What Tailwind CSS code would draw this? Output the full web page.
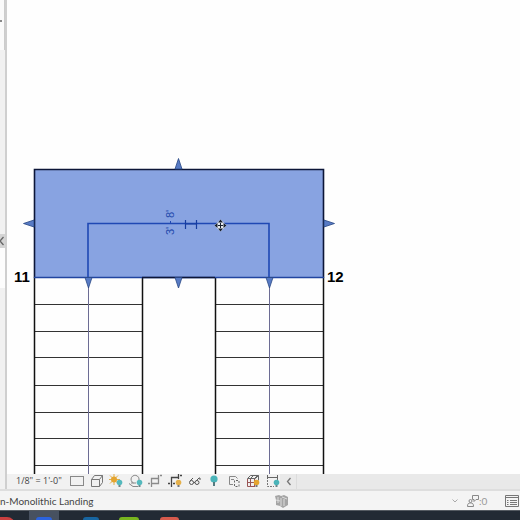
<!DOCTYPE html>
<html lang="en">
<head>
  <meta charset="UTF-8">
  <meta name="viewport" content="width=device-width, initial-scale=1.0">
  <title>Stair Plan</title>
  <script src="https://cdn.jsdelivr.net/npm/@tailwindcss/browser@4"></script>
</head>
<body class="h-screen overflow-hidden flex flex-col bg-[#f3f3f3] font-['Open_Sans',sans-serif] text-[#444]">
  <!-- Workspace -->
  <div class="flex-1 min-h-0 flex">
    <!-- Collapsed side panel -->
    <aside class="w-[7px] shrink-0 flex flex-col bg-[#f1f1f1] border-r-2 border-[#cfcfcf]">
      <div class="h-[50px] border-r border-[#ccc] bg-[#fafafa] flex items-center"><span class="w-[2px] h-[2px] mb-2 bg-[#888]"></span></div>
      <div class="flex-1"></div>
      <button type="button" aria-label="Expand panel" class="h-[14px] bg-[#d4d4d4] overflow-hidden">
        <svg class="w-[5px] h-[14px]" viewBox="0 0 5 14" fill="none" stroke="#666" stroke-width="1.3"><path d="M3.5 3L0 7l3.5 4"/></svg>
      </button>
      <div class="h-[40px] bg-[#fdfdfd]"></div>
      <div class="h-[201px] bg-[#f1f1f1]"></div>
    </aside>

    <main class="flex-1 min-w-0 flex flex-col">
      <!-- Drawing -->
      <div class="flex-1 min-h-0 bg-[#fefefe] overflow-hidden">
        <svg width="513" height="474" viewBox="7 0 513 474" fill="none">
          <!-- Landing -->
          <rect x="34" y="169" width="290" height="108" fill="#88a3e1"/>
          <!-- Treads -->
          <path d="M34 304.500H142M34 331.500H142M34 357.500H142M34 385.500H142M34 412.500H142M34 438.500H142M34 465.500H142M215 304.500H324M215 331.500H324M215 357.500H324M215 385.500H324M215 412.500H324M215 438.500H324M215 465.500H324" stroke="#333"/>
          <!-- Run outlines -->
          <path d="M34.500 277V474M142.500 277V474M215.500 277V474M323.500 277V474" stroke="#111" stroke-width="1.500"/>
          <path d="M88.500 277V474M269.500 277V474" stroke="#6c6c94"/>
          <path d="M34.500 277.500V169.500H323.500V277.500" stroke="#0c1638" stroke-width="1.600"/>
          <path d="M34 277.500H324" stroke="#2145a0" stroke-width="1.400"/>
          <path d="M142 277.500H215" stroke="#0c1638" stroke-width="1.400"/>
          <!-- Walk path and width dimension -->
          <path d="M88 278V223.500H269V278" stroke="#1f48b4" stroke-width="1.600"/>
          <path d="M185.500 220V229M196.500 220V229M185 224H196" stroke="#173da0" stroke-width="1.200"/>
          <path d="M170.500 221V224" stroke="#1f48b4"/>
          <text transform="translate(174 235) rotate(-90)" fill="#2148ab" font-family="Liberation Sans, sans-serif" font-size="11">3'</text>
          <text transform="translate(174 218) rotate(-90)" fill="#2148ab" font-family="Liberation Sans, sans-serif" font-size="11">8'</text>
          <!-- Shape handles -->
          <g fill="#587bc5" stroke="#274684" stroke-width=".8">
            <path d="M175 169L178.500 158.500L182 169Z"/>
            <path d="M34 220L23.500 223.500L34 227Z"/>
            <path d="M324 220L334.500 223.500L324 227Z"/>
            <path d="M85 277.500H92L88.500 288Z"/>
            <path d="M175 277.500H182L178.500 288Z"/>
            <path d="M266 277.500H273L269.500 288Z"/>
          </g>
          <!-- Move cursor -->
          <path d="M220.500 219.500L224 223L226.500 225.500L224 228L220.500 231.500L217 228L214.500 225.500L217 223Z" fill="#e4e8ee"/>
          <path d="M220.500 219.500L223 222.500H218ZM220.500 231.500L223 228.500H218ZM214.500 225.500L217.500 223V228ZM226.500 225.500L223.500 223V228Z" fill="#17202e"/>
          <path d="M220.500 223V228M218 225.500H223" stroke="#17202e"/>
          <g fill="#000" font-family="Liberation Sans, sans-serif" font-size="15" font-weight="bold">
            <text x="14" y="282">11</text>
            <text x="327" y="282">12</text>
          </g>
        </svg>
      </div>

      <!-- View controls -->
      <div class="h-[15px] shrink-0 flex items-center bg-[#e9e9e9]">
        <div class="h-full flex items-center bg-[#f1f1f1] pl-[9px] pb-[2px]">
          <button type="button" class="w-[54px] text-left text-[9px] leading-none whitespace-nowrap">1/8" = 1'-0"</button>
          <div class="w-[210px] flex justify-between items-center">
            <button type="button" aria-label="Detail level" class="w-[14px] h-[14px]"><svg viewBox="0 0 14 14" fill="none" stroke="#888"><rect x=".5" y="2.500" width="13" height="9"/></svg></button>
            <button type="button" aria-label="Visual style" class="w-[14px] h-[14px]"><svg viewBox="0 0 14 14" fill="none" stroke="#777"><path d="M1.500 5.500h8v7h-8zM1.500 5.500l3-4h8v7l-3 4M9.500 5.500l3-4"/></svg></button>
            <button type="button" aria-label="Sun path" class="w-[14px] h-[14px]"><svg viewBox="0 0 14 14"><path d="M5 0v11M0 5.500h11M1 1.500l8 8M9 1.500l-8 8" stroke="#e3b04a"/><circle cx="5" cy="5.500" r="3" fill="#e5a52f"/><circle cx="10.500" cy="8.500" r="2.800" fill="#55b9bd"/><path d="M9.500 11h2v2h-2z" fill="#6d8588"/></svg></button>
            <button type="button" aria-label="Shadows" class="w-[14px] h-[14px]"><svg viewBox="0 0 14 14"><path d="M4.500 9A4 4 0 1 1 9 8M0 9.500l4 3h5M2 9h5" fill="none" stroke="#888"/><circle cx="10.500" cy="8.500" r="2.800" fill="#55b9bd"/><path d="M9.500 11h2v2h-2z" fill="#6d8588"/></svg></button>
            <button type="button" aria-label="Crop view" class="w-[14px] h-[14px]"><svg viewBox="0 0 14 14" fill="none" stroke="#8a8a8a" stroke-width="1.300"><path d="M3.500 13V4.500H11M10.500 1v8.500H4M0 9.500h2M12 1.500h2"/></svg></button>
            <button type="button" aria-label="Show crop region" class="w-[14px] h-[14px]"><svg viewBox="0 0 14 14"><path d="M3.500 13V3.500H11M10.500 0v5M0 9.500h2M5 9.500h2M12 1.500h2" fill="none" stroke="#444" stroke-width="1.300"/><circle cx="10.500" cy="8.500" r="2.800" fill="#e5b04a"/><path d="M9.500 11h2v2h-2z" fill="#777"/></svg></button>
            <button type="button" aria-label="Temporary hide" class="w-[14px] h-[14px]"><svg viewBox="0 0 14 14" fill="none" stroke="#555"><circle cx="3.500" cy="8.500" r="2"/><circle cx="9" cy="8.500" r="2"/><path d="M2 7l3-3M8 7l3-3h1v2M5.500 8.500H7"/></svg></button>
            <button type="button" aria-label="Reveal hidden" class="w-[14px] h-[14px]"><svg viewBox="0 0 14 14"><circle cx="7" cy="5" r="3.600" fill="#4ab4b9"/><path d="M6 8h2v4H6z" fill="#557b80"/></svg></button>
            <button type="button" aria-label="View properties" class="w-[14px] h-[14px]"><svg viewBox="0 0 14 14" fill="none" stroke="#888"><path d="M6 10.500H2.500v-8h6l2 2M4 5.500h3"/><path d="M7.500 12V6.500H12v6H7" stroke="#666" stroke-dasharray="2 1.500"/></svg></button>
            <button type="button" aria-label="Analytical model" class="w-[14px] h-[14px]"><svg viewBox="0 0 14 14"><path d="M1.500 4.500l3-3h8v5M4.500 4.500l3-3M8.500 4.500l3-3M1.500 4.500h8l3-3" fill="none" stroke="#666"/><path d="M1.500 5v7.500H9M4.500 5v7M8.500 5v7M1.500 8.500H9" fill="none" stroke="#955"/><circle cx="10.500" cy="8.500" r="2.800" fill="#e5a52f"/><path d="M9.500 11h2v2h-2z" fill="#777"/></svg></button>
            <button type="button" aria-label="Reveal constraints" class="w-[14px] h-[14px]"><svg viewBox="0 0 14 14"><path d="M1.500 1v4M11.500 1v4M1.500 3.500h10" fill="none" stroke="#666"/><path d="M1.500 6v6.500H8M11.500 5v2" fill="none" stroke="#777" stroke-dasharray="2 1"/><circle cx="10.500" cy="8.500" r="2.800" fill="#4ab4b9"/><path d="M9.500 11h2v2h-2z" fill="#6d8588"/></svg></button>
          </div>
        </div>
        <button type="button" aria-label="Scroll left" class="h-full w-[17px] pl-[6px] pb-[2px] border-r border-[#dcdcdc]"><svg class="w-[6px] h-[14px]" viewBox="0 0 6 14" fill="none" stroke="#777" stroke-width="1.300"><path d="M4.500 4L1.500 7.500l3 3.500"/></svg></button>
      </div>
    </main>
  </div>

  <!-- Status bar -->
  <footer class="h-[21px] shrink-0 flex items-center border-t-2 border-[#dedede] bg-[#f4f4f4] font-['Lato',sans-serif]">
    <p class="w-[275px] shrink-0 text-[10px] leading-none whitespace-nowrap">n-Monolithic Landing</p>
    <svg class="w-[14px] h-[14px]" viewBox="0 0 14 14"><path d="M0 2l4-1 2 1 3-1 4 2v8l-5 3-3-2-4-1V6z" fill="#a5a5a5"/><path d="M3 3v6M6 4v8M9 5v7M1 6l4 1M7 3l5 2" stroke="#ddd" fill="none"/></svg>
    <div class="ml-auto flex items-center">
      <button type="button" aria-label="Worksets" class="w-[15px]"><svg class="w-[6px] h-[6px]" viewBox="0 0 6 6" fill="none" stroke="#aaa"><path d="M.5 1.500L3 4l2.500-2.500"/></svg></button>
      <svg class="w-[12px] h-[14px]" viewBox="0 0 12 14" fill="none" stroke="#888"><circle cx="3.500" cy="7" r="1.500"/><path d="M.5 12.500c0-3 1-3.500 3-3.500s3 .5 3 3.500zM5.500 1.500h6v4H9l-2 2v-2H5.500z"/></svg>
      <span class="w-[26px] text-[10px] leading-none text-[#999]">:0</span>
      <button type="button" aria-label="Design options" class="w-[15px] h-[14px]"><svg viewBox="0 0 15 14" fill="none" stroke="#777"><path d="M.5 1.500h13v11H.5zM.5 3.500h13M5 6.500h7M5 8.500h7M5 10.500h7M2 6.500h1.500M2 8.500h1.500M2 10.500h1.500"/></svg></button>
    </div>
  </footer>

  <!-- Taskbar -->
  <nav class="h-[10px] shrink-0 flex items-end overflow-hidden bg-[#222a34] border-t border-[#555b62]" aria-label="Taskbar">
    <div class="w-[29px] h-full overflow-hidden"><div class="mt-[6px] w-[15px] h-[16px] rounded-r-full bg-[#c93f3f]"></div></div>
    <div class="w-[30px] h-full bg-[#475160] flex justify-center items-end"><div class="w-[16px] h-[3px] rounded-t-sm bg-[#2b63df]"></div></div>
    <div class="ml-[24px] w-[16px] h-[3px] rounded-t-sm bg-[#1765a0]"></div>
    <div class="ml-[20px] w-[20px] h-[3px] rounded-t-sm bg-[#78b51f]"></div>
    <div class="ml-[21px] w-[19px] h-[3px] rounded-t-sm bg-[#d65a4c]"></div>
  </nav>
</body>
</html>
